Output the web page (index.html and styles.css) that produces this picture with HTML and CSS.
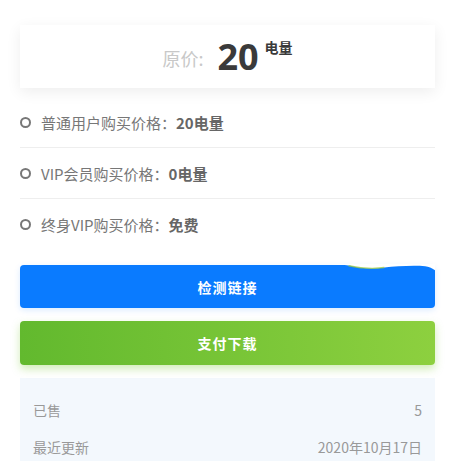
FILE: index.html
```html
<!DOCTYPE html>
<html lang="zh">
<head>
<meta charset="utf-8">
<link rel="stylesheet" href="styles.css">
</head>
<body>
<div class="page">
  <div class="price-card">
    <span class="label">原价:</span>
    <span class="amount">20</span>
    <span class="unit">电量</span>
  </div>
  <ul class="prices">
    <li><span class="dot"></span>普通用户购买价格：<b>20电量</b></li>
    <li><span class="dot"></span>VIP会员购买价格：<b>0电量</b></li>
    <li><span class="dot"></span>终身VIP购买价格：<b>免费</b></li>
  </ul>
  <div class="btn btn-blue">
    检测链接
    <svg class="wave" viewBox="0 0 110 8" preserveAspectRatio="none"><path d="M0 0 L110 0 L110 7 C104 2 98 2 90 2 C80 2 70 3 62 4 C50 6 40 5 30 2 C20 0 10 0 0 0 Z" fill="#fff"/><path d="M28 2 C40 5 50 6 62 4" stroke="#9ccc3a" stroke-width="1.5" fill="none" opacity="0.7"/></svg>
  </div>
  <div class="btn btn-green">支付下载</div>
  <div class="meta">
    <div class="row"><span>已售</span><span>5</span></div>
    <div class="row"><span>最近更新</span><span>2020年10月17日</span></div>
  </div>
</div>
</body>
</html>
```

FILE: styles.css
```css
html, body {
  margin: 0;
  padding: 0;
  background: #fff;
}
body {
  font-family: "Noto Sans CJK SC", "Open Sans", sans-serif;
  color: #666;
}
.page {
  width: 415px;
  margin-left: 20px;
  padding-top: 25px;
}
.price-card {
  height: 63px;
  background: #fff;
  box-shadow: 0 4px 14px rgba(0, 0, 0, 0.07);
  display: flex;
  justify-content: center;
  align-items: center;
}
.label {
  font-size: 18px;
  color: #c8c8c8;
  margin-right: 14px;
  margin-top: 2px;
}
.amount {
  font-family: "Open Sans", sans-serif;
  font-size: 36px;
  font-weight: 700;
  color: #3a3a3a;
  line-height: 1;
  margin-right: 6px;
}
.unit {
  font-size: 14px;
  font-weight: 700;
  color: #3a3a3a;
  align-self: flex-start;
  margin-top: 12px;
}
.prices {
  list-style: none;
  margin: 9px 0 0;
  padding: 0;
}
.prices li {
  height: 50px;
  display: flex;
  align-items: center;
  font-size: 15px;
  color: #777;
  border-bottom: 1px solid #eee;
}
.prices li:last-child {
  border-bottom: none;
}
.prices b {
  color: #666;
}
.dot {
  width: 7px;
  height: 7px;
  border: 2px solid #777;
  border-radius: 50%;
  margin: 0 10px 0 0;
}
.btn {
  position: relative;
  height: 43px;
  border-radius: 4px;
  display: flex;
  align-items: center;
  justify-content: center;
  color: #fff;
  font-size: 14px;
  font-weight: 700;
  letter-spacing: 1px;
}
.btn-blue {
  margin-top: 16px;
  background: #0a7bff;
  box-shadow: 0 2px 6px rgba(10, 123, 255, 0.15);
}
.wave {
  position: absolute;
  top: -1px;
  right: 0;
  width: 116px;
  height: 7px;
}
.btn-green {
  margin-top: 13px;
  height: 44px;
  background: linear-gradient(90deg, #62b92e, #8dd03f);
  box-shadow: 0 4px 8px rgba(120, 200, 50, 0.35);
}
.meta {
  margin-top: 13px;
  background: #f3f8fd;
  padding: 13px 13px 0;
}
.row {
  display: flex;
  justify-content: space-between;
  height: 37px;
  align-items: center;
  font-size: 14px;
  color: #999;
}
```
